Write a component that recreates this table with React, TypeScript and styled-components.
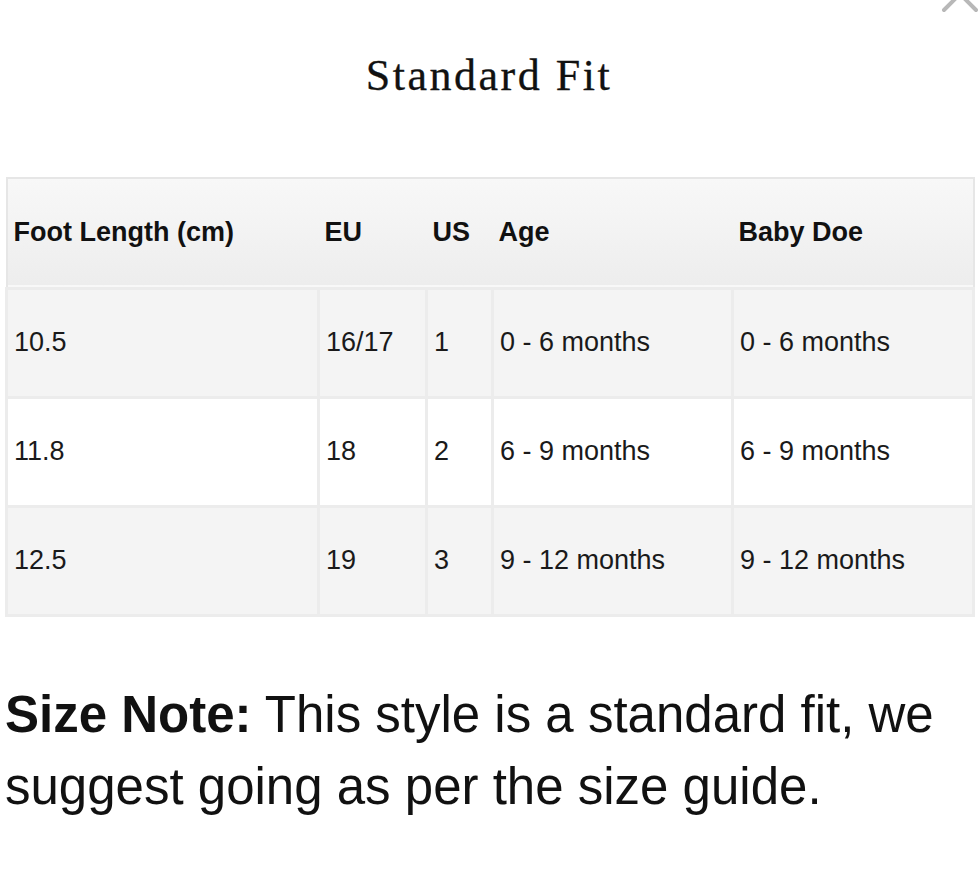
import React from "react";
import styled, { createGlobalStyle } from "styled-components";

const Global = createGlobalStyle`
  html, body { margin: 0; padding: 0; background: #ffffff; }
  body { font-family: "Liberation Sans", Arial, sans-serif; color: #111; }
`;

const Page = styled.div`
  position: relative;
  width: 978px;
  height: 874px;
  overflow: hidden;
  padding: 0 5px;
  box-sizing: border-box;
`;

const Close = styled.svg`
  position: absolute;
  right: -4px;
  top: -28px;
  width: 44px;
  height: 44px;
`;

const Title = styled.h2`
  margin: 0;
  padding-top: 50px;
  height: 177px;
  box-sizing: border-box;
  text-align: center;
  font-family: "Liberation Serif", "DejaVu Serif", serif;
  font-weight: 400;
  font-size: 44px;
  letter-spacing: 2.5px;
  line-height: 52px;
  color: #111;
  -webkit-text-stroke: 0.3px #111;
`;

const Table = styled.table`
  width: 967px;
  border-collapse: collapse;
  table-layout: fixed;
  border: 2px solid #e6e6e6;
  font-size: 27px;
`;

const HeadRow = styled.tr`
  height: 110px;
  background: linear-gradient(#f8f8f8, #ededed);
  border-bottom: 3px solid #e2e2e2;
`;

const Th = styled.th<{ $w: number }>`
  box-sizing: border-box;
  width: ${(p) => p.$w}px;
  text-align: left;
  font-weight: 700;
  padding: 0 0 0 6px;
  color: #111;
`;

const BodyRow = styled.tr<{ $alt: boolean }>`
  height: 109px;
  background: ${(p) => (p.$alt ? "#f4f4f4" : "#ffffff")};
`;

const Td = styled.td`
  box-sizing: border-box;
  padding: 0 0 0 6px;
  border: 3px solid #ececec;
  color: #1a1a1a;
`;

const Note = styled.p`
  margin: 62px 0 0 0;
  font-size: 51px;
  line-height: 72px;
  color: #111;
  b { font-weight: 700; }
`;

const cols = [
  { h: "Foot Length (cm)", w: 312 },
  { h: "EU", w: 108 },
  { h: "US", w: 66 },
  { h: "Age", w: 240 },
  { h: "Baby Doe", w: 241 },
];

const rows = [
  ["10.5", "16/17", "1", "0 - 6 months", "0 - 6 months"],
  ["11.8", "18", "2", "6 - 9 months", "6 - 9 months"],
  ["12.5", "19", "3", "9 - 12 months", "9 - 12 months"],
];

export default function App() {
  return (
    <Page>
      <Global />
      <Close viewBox="0 0 44 44">
        <path d="M6 6 L38 38 M38 6 L6 38" stroke="#b8b8b8" strokeWidth="4" strokeLinecap="round" />
      </Close>
      <Title>Standard Fit</Title>
      <Table>
        <thead>
          <HeadRow>
            {cols.map((c) => (
              <Th key={c.h} $w={c.w}>{c.h}</Th>
            ))}
          </HeadRow>
        </thead>
        <tbody>
          {rows.map((r, i) => (
            <BodyRow key={i} $alt={i !== 1}>
              {r.map((v, j) => (
                <Td key={j}>{v}</Td>
              ))}
            </BodyRow>
          ))}
        </tbody>
      </Table>
      <Note>
        <b>Size Note:</b> This style is a standard fit, we suggest going as per the size guide.
      </Note>
    </Page>
  );
}
